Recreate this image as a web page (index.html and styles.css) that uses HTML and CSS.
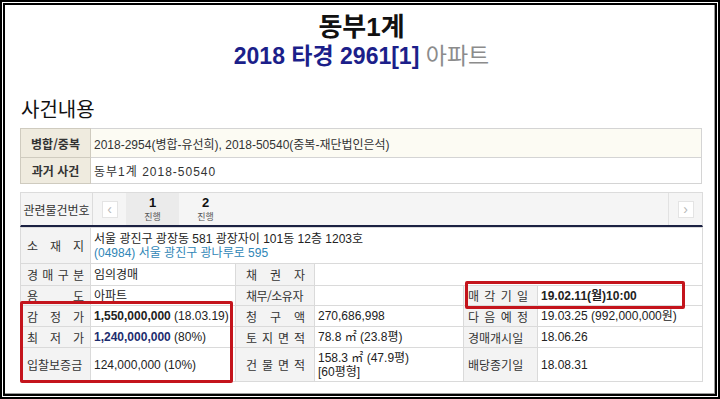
FILE: index.html
```html
<!DOCTYPE html>
<html lang="ko">
<head>
<meta charset="utf-8">
<title>동부1계 2018 타경 2961[1]</title>
<link rel="stylesheet" href="styles.css">
</head>
<body>
<div class="frame">
  <div class="inner">
    <header class="head">
      <h1 class="court">동부1계</h1>
      <p class="case"><span class="no">2018 타경 2961[1]</span> <span class="kind">아파트</span></p>
    </header>
    <h2 class="sec">사건내용</h2>

    <table class="merge">
      <tr class="r1">
        <th>병합/중복</th>
        <td>2018-2954(병합-유선희), 2018-50540(중복-재단법인은석)</td>
      </tr>
      <tr class="r2">
        <th>과거 사건</th>
        <td class="past">동부1계 2018-50540</td>
      </tr>
    </table>

    <div class="rel">
      <div class="rel-label">관련물건번호</div>
      <div class="rel-prev"><span class="arrow">&lsaquo;</span></div>
      <div class="rel-tab on"><b>1</b><span>진행</span></div>
      <div class="rel-tab"><b>2</b><span>진행</span></div>
      <div class="rel-fill"></div>
      <div class="rel-next"><span class="arrow">&rsaquo;</span></div>
    </div>

    <table class="info">
      <colgroup>
        <col class="c1"><col class="c2"><col class="c3"><col class="c4"><col class="c5"><col class="c6">
      </colgroup>
      <tr class="h36">
        <th class="l1">소 재 지</th>
        <td colspan="5" class="addr">서울 광진구 광장동 581 광장자이 101동 12층 1203호<br><span class="road">(04984) 서울 광진구 광나루로 595</span></td>
      </tr>
      <tr class="h22">
        <th class="l1">경 매 구 분</th>
        <td>임의경매</td>
        <th class="l2">채 권 자</th>
        <td colspan="3"></td>
      </tr>
      <tr class="h20">
        <th class="l1">용 도</th>
        <td>아파트</td>
        <th class="l2 tight">채무/소유자</th>
        <td></td>
        <th class="l3">매 각 기 일</th>
        <td><b>19.02.11(월)10:00</b></td>
      </tr>
      <tr class="h21">
        <th class="l1">감 정 가</th>
        <td><b>1,550,000,000</b> (18.03.19)</td>
        <th class="l2">청 구 액</th>
        <td>270,686,998</td>
        <th class="l3">다 음 예 정</th>
        <td>19.03.25 (992,000,000원)</td>
      </tr>
      <tr class="h21">
        <th class="l1">최 저 가</th>
        <td><b class="low">1,240,000,000</b> (80%)</td>
        <th class="l2">토 지 면 적</th>
        <td>78.8 ㎡ (23.8평)</td>
        <th class="l3">경매개시일</th>
        <td>18.06.26</td>
      </tr>
      <tr class="h34">
        <th class="l1">입찰보증금</th>
        <td>124,000,000 (10%)</td>
        <th class="l2">건 물 면 적</th>
        <td>158.3 ㎡ (47.9평)<br>[60평형]</td>
        <th class="l3">배당종기일</th>
        <td>18.08.31</td>
      </tr>
    </table>

    <div class="mark mark-price"></div>
    <div class="mark mark-date"></div>
  </div>
</div>
</body>
</html>
```

FILE: styles.css
```css
html, body {
  margin: 0;
  padding: 0;
  background: #fff;
}
body {
  width: 720px;
  height: 399px;
  overflow: hidden;
  font-family: "Liberation Sans", "Noto Sans CJK KR", sans-serif;
  color: #222;
}
.frame {
  box-sizing: border-box;
  height: 399px;
  border: 2px solid #000;
  padding: 1px;
}
.inner {
  position: relative;
  box-sizing: border-box;
  height: 100%;
  border: 2px solid #000;
  box-shadow: inset -1px -1px 0 #9a9a9a;
  padding: 0 12px 0 15px;
}

/* header */
.head {
  text-align: center;
  padding-top: 6px;
}
.court {
  margin: 0;
  font: bold 26px/32px "Liberation Sans", "Noto Sans CJK KR", sans-serif;
  color: #111;
}
.case {
  margin: 0;
  font: 23px/26px "Liberation Sans", "Noto Sans CJK KR", sans-serif;
}
.case .no {
  font-weight: bold;
  color: #1c1f8a;
}
.case .kind {
  color: #8c8c8c;
}
.sec {
  margin: 26px 0 5px 1px;
  font: 20px/28px "Noto Sans CJK KR", sans-serif;
  color: #111;
}

/* merge table */
.merge {
  width: 682px;
  border-collapse: collapse;
  border: 1px solid #c8c8c8;
  font-size: 12px;
}
.merge th {
  width: 69px;
  background: #efebdf;
  border: 1px solid #cfcbbf;
  font: bold 12px "Noto Sans CJK KR", sans-serif;
  color: #333;
  padding: 0;
}
.merge td {
  border: 1px solid #d4d4d4;
  padding: 0 0 0 3px;
  color: #333;
}
.merge .r1 { height: 29px; }
.merge .r1 td { background: #fcfbf3; }
.merge .r2 { height: 26px; }
.past { letter-spacing: 1px; }

/* related items bar */
.rel {
  display: flex;
  margin-top: 8px;
  height: 32px;
  border: 1px solid #dcdcdc;
  border-bottom: 2px solid #1b2142;
  background: #f5f5f5;
  font-size: 12px;
  color: #333;
}
.rel-label {
  width: 71px;
  border-right: 1px solid #dcdcdc;
  display: flex;
  align-items: center;
  justify-content: center;
  font-family: "Noto Sans CJK KR", sans-serif;
}
.rel-prev, .rel-next {
  width: 33px;
  display: flex;
  align-items: center;
  justify-content: center;
}
.rel-next {
  border-left: 1px solid #e2e2e2;
}
.arrow {
  box-sizing: border-box;
  width: 16px;
  height: 17px;
  border: 1px solid #e4e4e4;
  background: #fff;
  color: #b8b8b8;
  font-size: 14px;
  line-height: 14px;
  text-align: center;
}
.rel-tab {
  width: 53px;
  display: flex;
  flex-direction: column;
  align-items: center;
  justify-content: center;
}
.rel-tab.on { background: #ebebeb; }
.rel-tab b {
  display: block;
  font-size: 13px;
  line-height: 15px;
  color: #111;
}
.rel-tab span {
  display: block;
  font: 9px/13px "Noto Sans CJK KR", sans-serif;
  color: #555;
}
.rel-fill { flex: 1; }

/* info table */
.info {
  width: 682px;
  table-layout: fixed;
  border-collapse: collapse;
  border: 1px solid #d0d0d0;
  font-size: 12px;
  color: #222;
}
.c1 { width: 70px; }
.c2 { width: 145px; }
.c3 { width: 79px; }
.c4 { width: 149px; }
.c5 { width: 74px; }
.c6 { width: 165px; }
.info th, .info td {
  border: 1px solid #dadada;
  padding: 0;
  white-space: nowrap;
  overflow: hidden;
}
.info th {
  background: #f3f3f3;
  font: 12px "Noto Sans CJK KR", sans-serif;
  color: #333;
  text-align: justify;
  text-align-last: justify;
}
.info td {
  padding-left: 3px;
  line-height: 14px;
}
.info th.l1 { padding: 0 6px 0 6px; }
.info th.l2 { padding: 0 9px 0 10px; }
.info th.l3 { padding: 0 9px 0 4px; }
.info th.tight { letter-spacing: -0.5px; }
.h36 { height: 36px; }
.h22 { height: 22px; }
.h20 { height: 20px; }
.h21 { height: 21px; }
.h34 { height: 34px; }
.addr { line-height: 14px; }
.road { color: #2f86b6; }
.low { color: #1d2d6e; }

/* annotation marks */
.mark {
  position: absolute;
  border: 3px solid #c4141c;
  border-radius: 2px;
}
.mark-price {
  left: 15px;
  top: 296px;
  width: 207px;
  height: 76px;
}
.mark-date {
  left: 460px;
  top: 276px;
  width: 214px;
  height: 22px;
}
```
